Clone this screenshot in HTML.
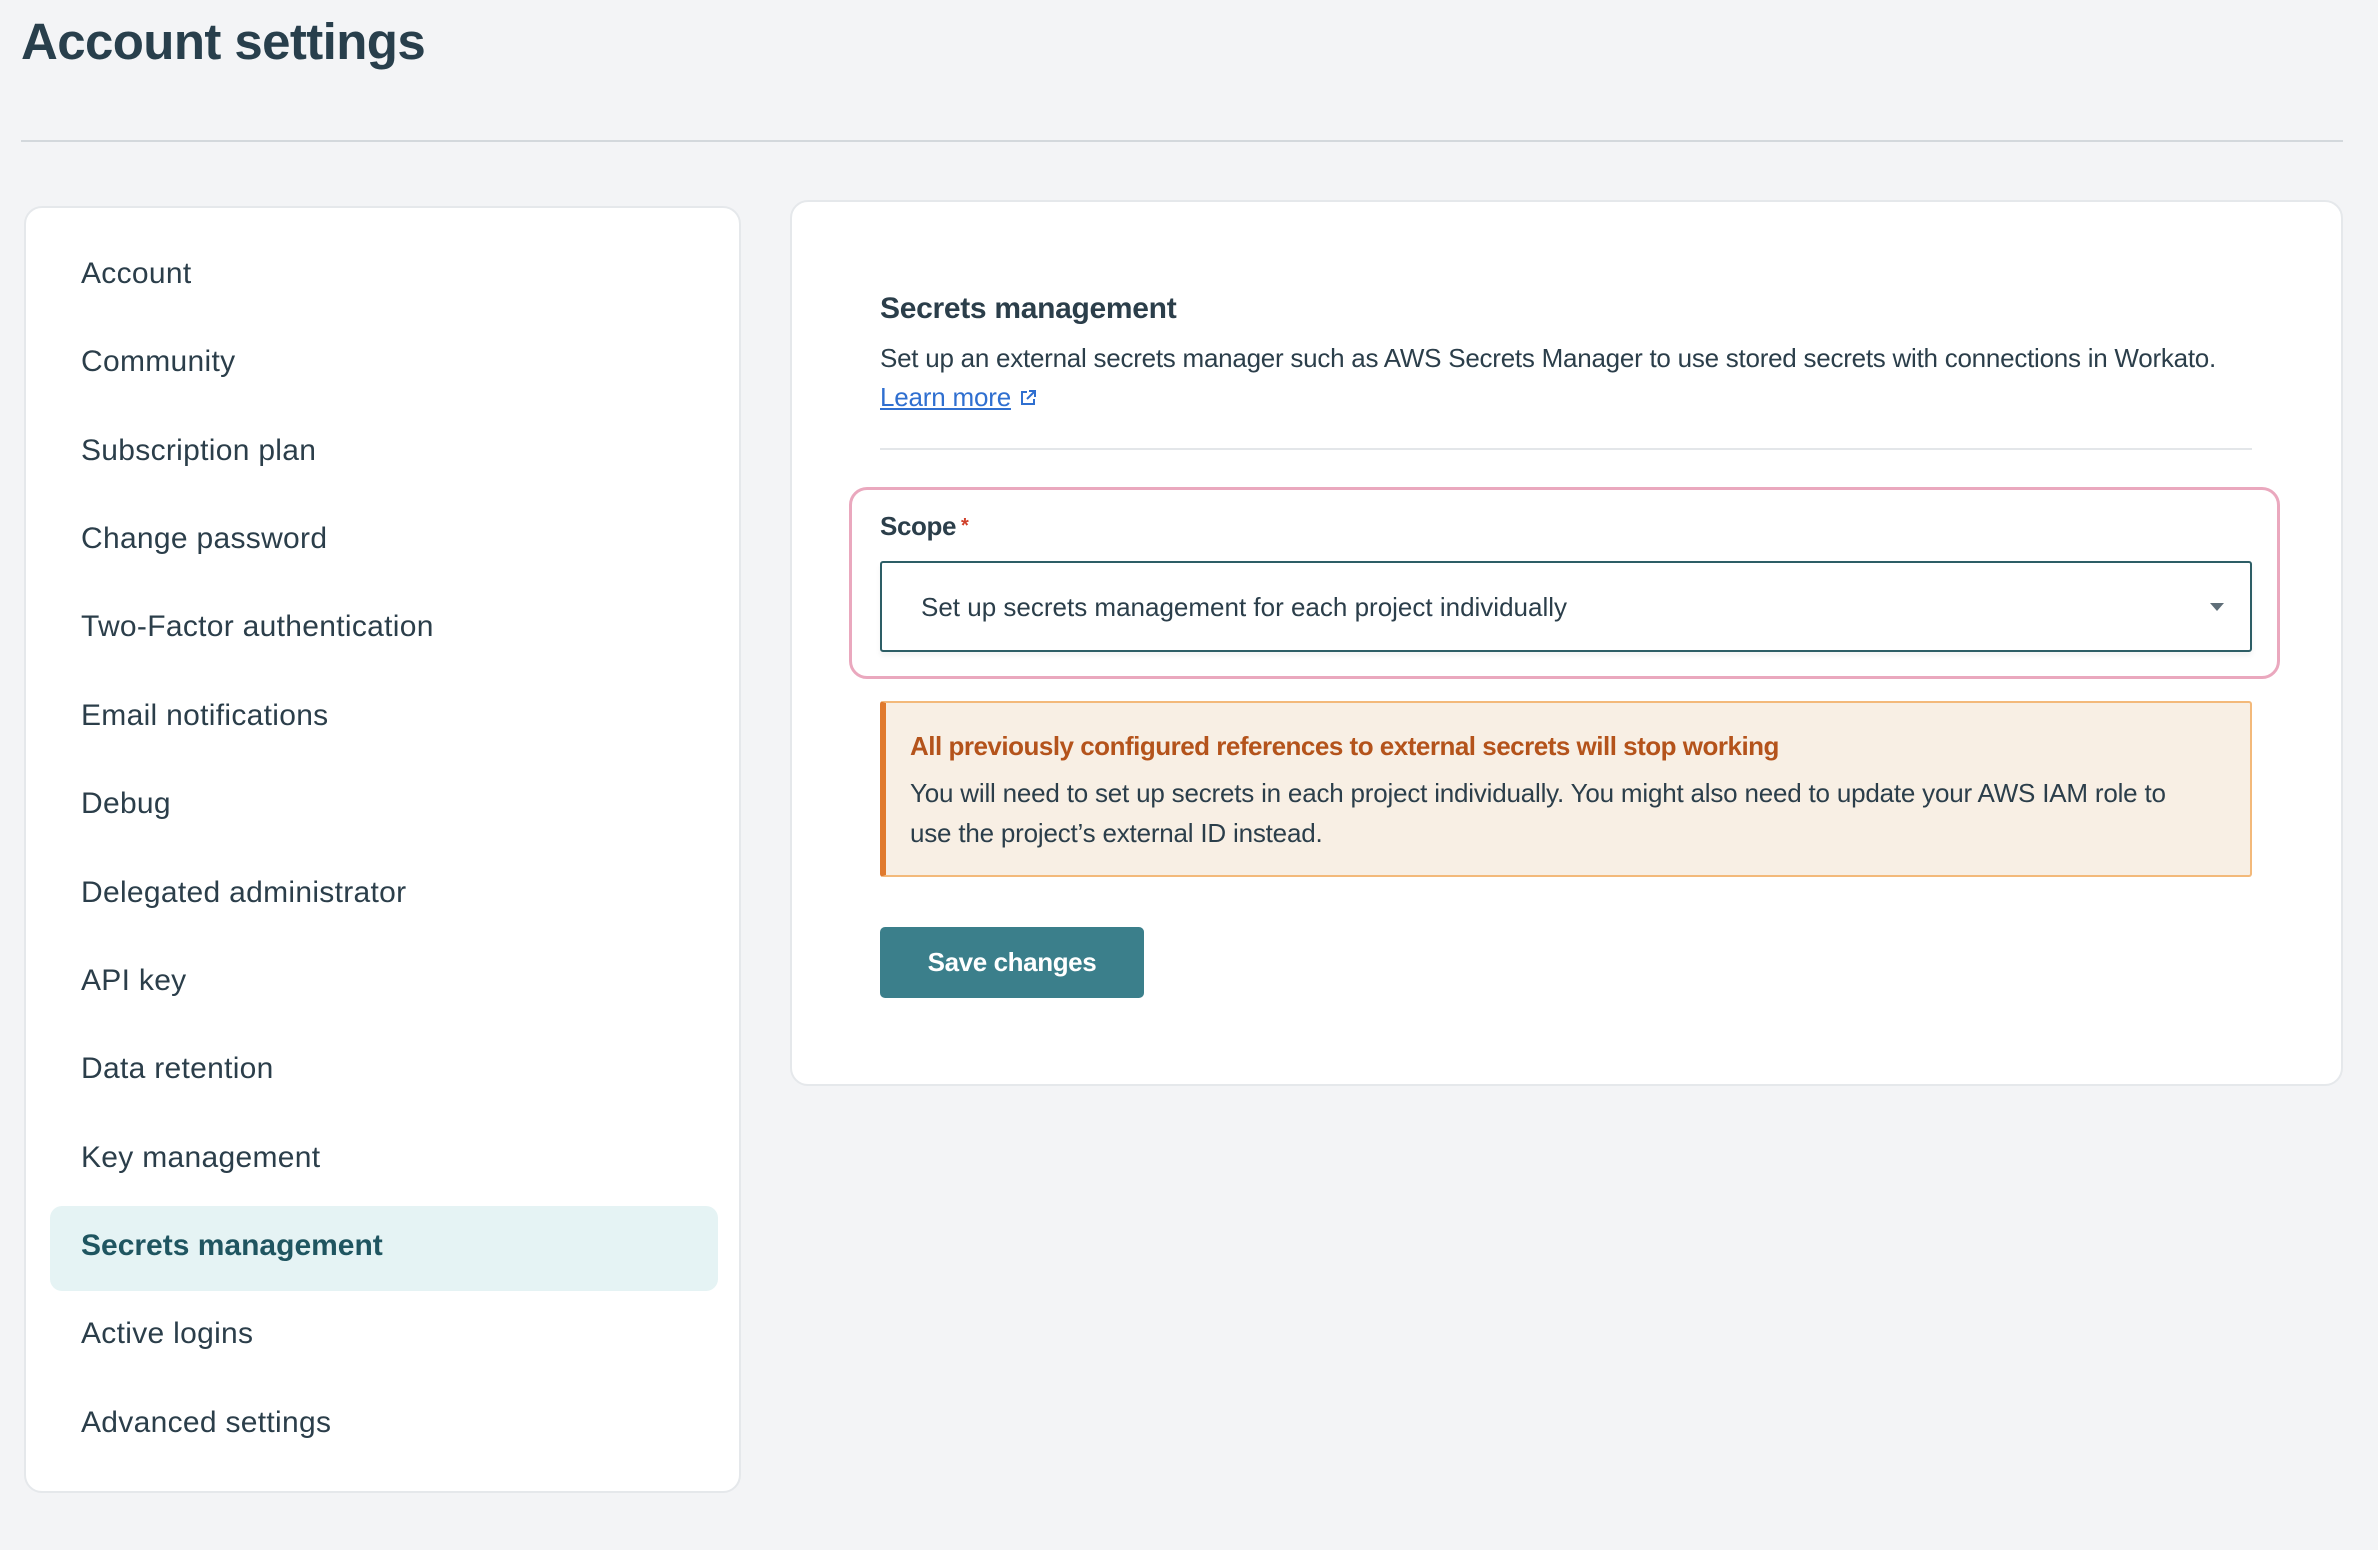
<!DOCTYPE html>
<html><head><meta charset="utf-8"><style>
*{box-sizing:border-box;margin:0;padding:0}
body{width:2378px;height:1550px;background:#f3f4f6;font-family:"Liberation Sans",sans-serif;color:#2b3e4a;position:relative;overflow:hidden}
.abs{position:absolute}
h1{position:absolute;left:21px;top:6px;font-size:51px;font-weight:bold;letter-spacing:-0.6px;color:#283f4c;line-height:72px}
.hr{position:absolute;left:21px;width:2322px;top:140px;height:2px;background:#d3d8dc}
.side{position:absolute;left:24px;top:206px;width:717px;height:1287px;background:#fff;border:2px solid #e5e8eb;border-radius:18px}
.item{position:absolute;left:55px;font-size:30px;line-height:40px;letter-spacing:0.3px;color:#2b3e4a}
.active{position:absolute;left:24px;top:998px;width:668px;height:85px;background:#e5f3f4;border-radius:12px}
.main{position:absolute;left:790px;top:200px;width:1553px;height:886px;background:#fff;border:2px solid #e5e8eb;border-radius:18px}
.t{position:absolute;white-space:nowrap}
</style></head><body>
<h1>Account settings</h1>
<div class="hr"></div>
<div class="side">
<div class="active"></div>
<div class="item" style="top:46px">Account</div>
<div class="item" style="top:134px">Community</div>
<div class="item" style="top:223px">Subscription plan</div>
<div class="item" style="top:311px">Change password</div>
<div class="item" style="top:399px">Two-Factor authentication</div>
<div class="item" style="top:488px">Email notifications</div>
<div class="item" style="top:576px">Debug</div>
<div class="item" style="top:665px">Delegated administrator</div>
<div class="item" style="top:753px">API key</div>
<div class="item" style="top:841px">Data retention</div>
<div class="item" style="top:930px">Key management</div>
<div class="item" style="top:1018px;font-weight:bold;color:#1f5560;letter-spacing:0">Secrets management</div>
<div class="item" style="top:1106px">Active logins</div>
<div class="item" style="top:1195px">Advanced settings</div>
</div>
<div class="main"></div>
<div class="t" style="left:880px;top:290px;font-size:30px;font-weight:bold;letter-spacing:-0.3px;line-height:38px">Secrets management</div>
<div class="t" style="left:880px;top:341px;font-size:26px;letter-spacing:-0.25px;line-height:34px">Set up an external secrets manager such as AWS Secrets Manager to use stored secrets with connections in Workato.</div>
<div class="t" style="left:880px;top:380px;font-size:26px;letter-spacing:-0.2px;line-height:34px;color:#2f6fd0;text-decoration:underline">Learn more</div>
<svg class="abs" style="left:1018px;top:388px" width="20" height="20" viewBox="0 0 20 20" fill="none" stroke="#2f6fd0" stroke-width="2"><path d="M9 4H4v12h12v-5"/><path d="M11 3h6v6M17 3l-8 8"/></svg>
<div class="abs" style="left:880px;top:448px;width:1372px;height:2px;background:#e3e6e9"></div>
<div class="abs" style="left:849px;top:487px;width:1431px;height:192px;border:3px solid #eaa8be;border-radius:18px"></div>
<div class="t" style="left:880px;top:509px;font-size:26px;font-weight:bold;letter-spacing:-0.4px;line-height:34px">Scope<span style="color:#d0402a;font-size:20px;vertical-align:top;margin-left:5px">*</span></div>
<div class="abs" style="left:880px;top:561px;width:1372px;height:91px;border:2px solid #2d5e66;border-radius:3px;box-shadow:0 4px 6px rgba(0,0,0,0.05)"></div>
<div class="t" style="left:921px;top:590px;font-size:26px;letter-spacing:0;line-height:34px">Set up secrets management for each project individually</div>
<svg class="abs" style="left:2208px;top:601px" width="18" height="12" viewBox="0 0 18 12"><path d="M2 2h14L9 10z" fill="#5f6e78"/></svg>
<div class="abs" style="left:880px;top:701px;width:1372px;height:176px;background:#f8efe4;border:2px solid #f3b97a;border-left:6px solid #e07a2e;border-radius:3px"></div>
<div class="t" style="left:910px;top:729px;font-size:26px;font-weight:bold;letter-spacing:-0.5px;line-height:34px;color:#b4531b">All previously configured references to external secrets will stop working</div>
<div class="t" style="left:910px;top:776px;font-size:26px;letter-spacing:-0.2px;line-height:34px">You will need to set up secrets in each project individually. You might also need to update your AWS IAM role to</div>
<div class="t" style="left:910px;top:816px;font-size:26px;letter-spacing:-0.2px;line-height:34px">use the project’s external ID instead.</div>
<div class="abs" style="left:880px;top:927px;width:264px;height:71px;background:#3b7f8b;border-radius:5px;color:#fff;font-size:26px;font-weight:bold;letter-spacing:-0.4px;line-height:71px;text-align:center">Save changes</div>
</body></html>
